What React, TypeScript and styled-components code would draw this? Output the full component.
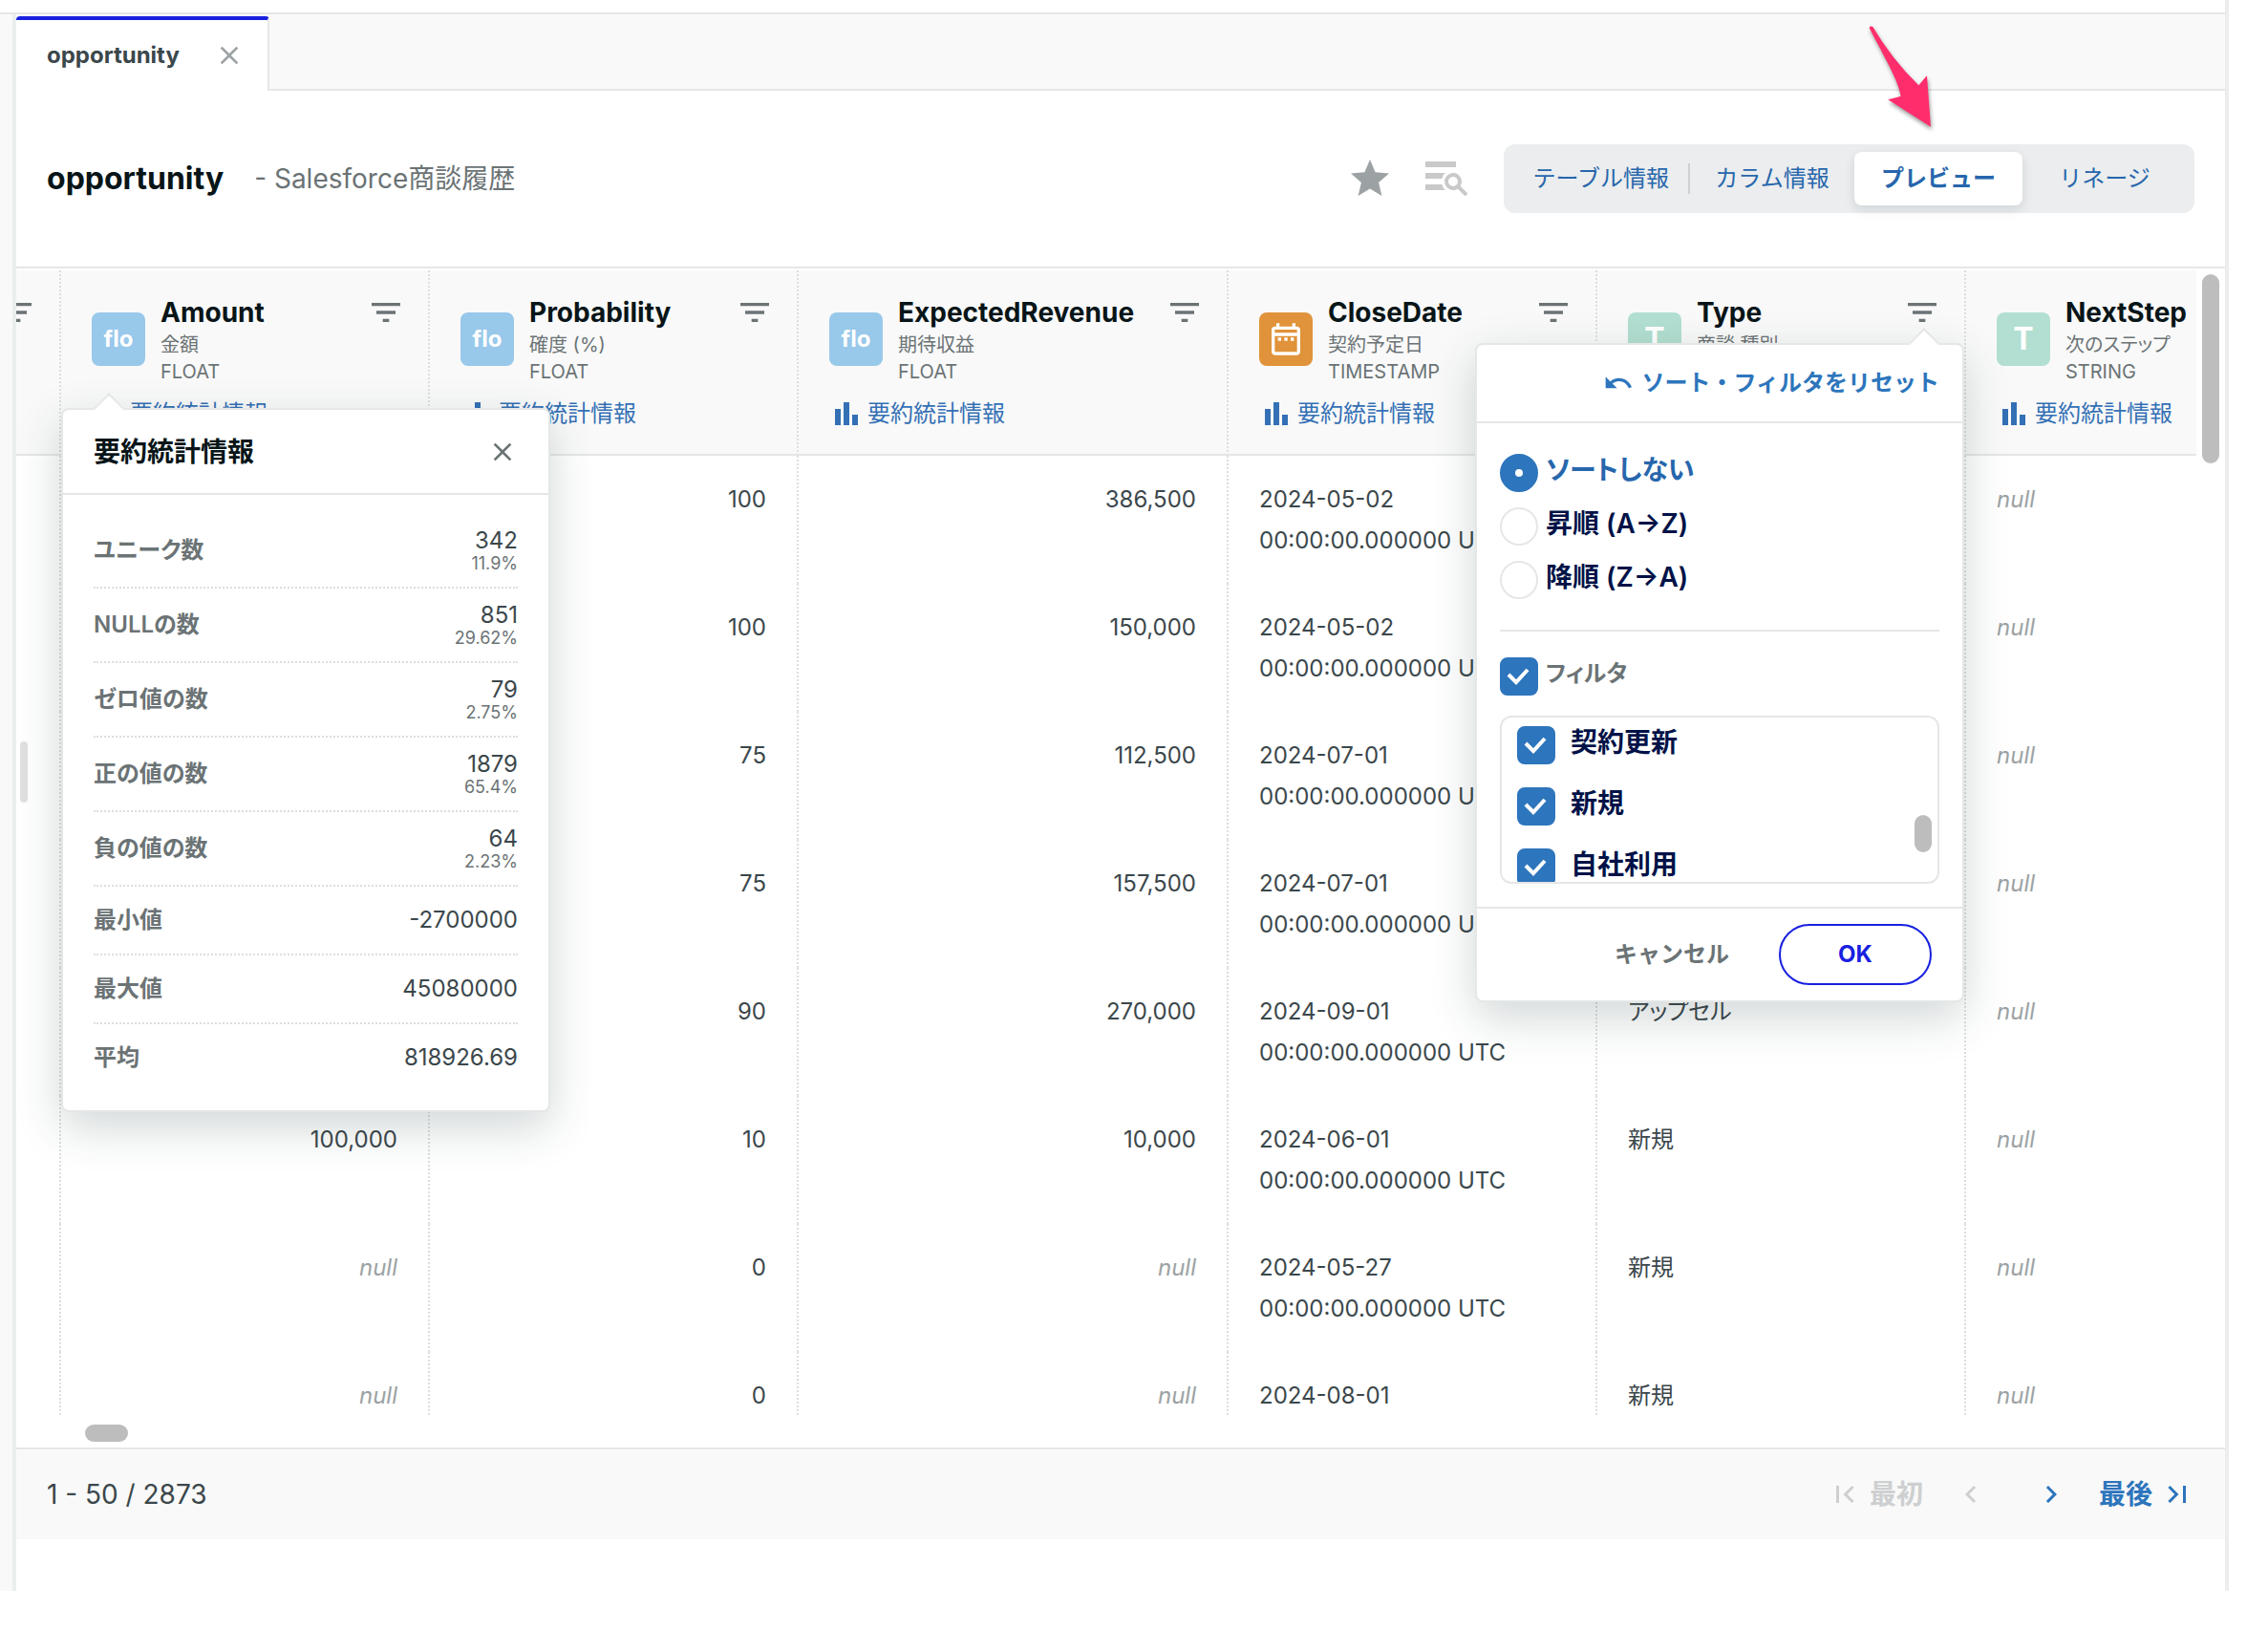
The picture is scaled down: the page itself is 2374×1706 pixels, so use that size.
import React, { useState } from "react";
import styled, { createGlobalStyle, css } from "styled-components";

const color = {
  ink: "#081518",
  text: "#3b474b",
  muted: "#6b7375",
  faint: "#9ca2a4",
  disabled: "#cdcfd0",
  line: "#e5e7e7",
  dots: "#dcdede",
  panel: "#f9f9f9",
  blue: "#2d75bc",
  blueDark: "#2766ac",
  link: "#3470b5",
  navy: "#001247",
  primary: "#1820e0",
  thumb: "#bdbdbd",
};

const GlobalStyle = createGlobalStyle`
  *, *::before, *::after { box-sizing: border-box; }
  body {
    margin: 0;
    background: #fff;
    color: ${color.text};
    font-family: Inter, "Noto Sans CJK JP", sans-serif;
    font-feature-settings: "palt";
    font-size: 24px;
  }
  button, input { font: inherit; color: inherit; }
  button {
    padding: 0;
    border: 0;
    background: none;
    cursor: pointer;
    line-height: 40px;
    font-feature-settings: normal;
  }
  h1, h2, p, dl, dd { margin: 0; }
`;

/* ---------- shell ---------- */

const Shell = styled.div`
  position: relative;
  height: 100vh;
  padding: 0 41px 41px 0;
`;

const Frame = styled.div`
  display: flex;
  flex-direction: column;
  height: 100%;
  border-right: 4px solid #eceeee;
`;

const TopEdge = styled.div`
  height: 15px;
  flex: none;
  border-bottom: 2px solid ${color.line};
`;

const Body = styled.div`
  display: flex;
  flex: 1;
  min-height: 0;
`;

const SideEdge = styled.aside`
  width: 17px;
  flex: none;
  background: ${color.panel};
  border-right: 4px solid #eaeeed;
`;

const Main = styled.main`
  position: relative;
  display: flex;
  flex-direction: column;
  flex: 1;
  min-width: 0;
  padding-bottom: 54px;
`;

const ResizeHandle = styled.div`
  position: absolute;
  left: 4px;
  top: calc(50% - 64px);
  width: 8px;
  height: 64px;
  border-radius: 4px;
  background: #e0e0e0;
`;

/* ---------- tabs ---------- */

const TabBar = styled.div`
  display: flex;
  flex: none;
  height: 80px;
  padding-top: 2px;
  background: linear-gradient(${color.line}, ${color.line}) bottom / 100% 2px no-repeat ${color.panel};
`;

const Tab = styled.div`
  display: flex;
  align-items: center;
  gap: 36px;
  padding: 0 24px 0 32px;
  background: #fff;
  border-top: 4px solid ${color.primary};
  border-right: 2px solid ${color.line};
  border-radius: 4px 4px 0 0;
  font-weight: 700;
  line-height: 40px;
  color: ${color.text};
`;

const IconButton = styled.button<{ $tone?: string }>`
  display: inline-flex;
  flex: none;
  color: ${(p) => p.$tone ?? color.muted};
`;

/* ---------- title ---------- */

const TitleBar = styled.header`
  display: flex;
  align-items: center;
  flex: none;
  height: 186px;
  padding: 0 32px;
  border-bottom: 2px solid ${color.line};
`;

const Title = styled.h1`
  font-size: 32px;
  line-height: 40px;
  font-weight: 700;
  color: ${color.ink};
`;

const Subtitle = styled.p`
  margin-left: 32px;
  font-size: 28px;
  line-height: 40px;
  color: ${color.muted};
`;

const Tools = styled.div`
  display: flex;
  align-items: center;
  gap: 34px;
  margin: 0 38px 0 auto;
`;

const Segments = styled.nav`
  display: flex;
  align-items: center;
  padding: 8px;
  border-radius: 12px;
  background: #ebedee;
`;

const Segment = styled.button<{ $active?: boolean; $divided?: boolean }>`
  position: relative;
  height: 56px;
  min-width: 172px;
  padding: 0 22px;
  border-radius: 8px;
  color: ${color.blueDark};
  ${(p) =>
    p.$active &&
    css`
      min-width: 176px;
      background: #fff;
      font-weight: 600;
      box-shadow: 0 4px 12px rgba(20, 40, 50, 0.12);
    `}
  ${(p) =>
    p.$divided &&
    css`
      &::after {
        content: "";
        position: absolute;
        right: 0;
        top: 12px;
        width: 2px;
        height: 32px;
        background: #cfd2d3;
      }
    `}
`;

/* ---------- table ---------- */

const Sheet = styled.section`
  display: flex;
  flex-direction: column;
  flex: 1;
  min-height: 0;
`;

const SheetRow = styled.div`
  display: flex;
  flex: 1;
  min-height: 0;
  padding-top: 2px;
`;

const Viewport = styled.div`
  flex: 1;
  min-width: 0;
  overflow: hidden;
`;

const VTrack = styled.div`
  width: 30px;
  flex: none;
  padding: 4px 6px;
`;

const VThumb = styled.div`
  width: 18px;
  height: 198px;
  border-radius: 9px;
  background: ${color.thumb};
`;

const HTrack = styled.div`
  height: 32px;
  flex: none;
  padding: 8px 72px;
`;

const HThumb = styled.div`
  width: 45px;
  height: 18px;
  border-radius: 9px;
  background: ${color.thumb};
`;

const Table = styled.table`
  table-layout: fixed;
  width: 2425px;
  border-spacing: 0;
  line-height: 43px;
`;

const HeadCell = styled.th`
  position: relative;
  padding: 24px 24px 24px 32px;
  vertical-align: top;
  text-align: left;
  font-weight: 400;
  background: ${color.panel};
  border-left: 2px dotted ${color.dots};
  border-bottom: 2px solid ${color.line};
  &:first-child {
    padding-left: 0;
    border-left: 0;
  }
`;

const ClippedEnd = styled.div`
  display: flex;
  justify-content: flex-end;
  overflow: hidden;
`;

const HeadGrid = styled.div`
  display: grid;
  grid-template-columns: 56px 1fr 40px;
  column-gap: 16px;
`;

const HeadGridText = styled.div`
  min-width: 0;
  white-space: nowrap;
`;

const ColName = styled.div`
  font-size: 28px;
  line-height: 40px;
  font-weight: 700;
  color: ${color.ink};
`;

const ColNote = styled.div`
  font-size: 20px;
  line-height: 28px;
  color: ${color.muted};
`;

const TypeBadge = styled.div<{ $kind: Kind }>`
  display: flex;
  align-items: center;
  justify-content: center;
  width: 56px;
  height: 56px;
  margin-top: 20px;
  border-radius: 8px;
  color: #fff;
  font-weight: 700;
  line-height: 32px;
  font-size: ${(p) => (p.$kind === "text" ? 32 : 24)}px;
  background: ${(p) => ({ float: "#98c8ea", date: "#e0933a", text: "#b2dfd1" })[p.$kind]};
`;

const StatsLink = styled.button`
  display: flex;
  align-items: center;
  gap: 10px;
  height: 36px;
  margin: 12px 0 0 6px;
  color: ${color.link};
  line-height: 36px;
`;

const Cell = styled.td<{ $align?: "right" }>`
  height: 134px;
  padding: 24px 32px;
  vertical-align: top;
  text-align: ${(p) => p.$align ?? "left"};
  border-left: 2px dotted ${color.dots};
  &:first-child {
    border-left: 0;
    padding: 0;
  }
`;

const Null = styled.em`
  color: ${color.faint};
`;

/* ---------- popovers ---------- */

const Popover = styled.div<{ $side: "left" | "right" }>`
  position: absolute;
  z-index: 10;
  width: 512px;
  background: #fff;
  border: 2px solid ${color.line};
  border-radius: 8px;
  box-shadow: 0 16px 48px rgba(30, 55, 55, 0.2);
  font-weight: 400;
  ${(p) => (p.$side === "left" ? "left: 0; top: 144px;" : "right: 0; top: 76px;")}
  &::before {
    content: "";
    position: absolute;
    top: -13px;
    ${(p) => (p.$side === "left" ? "left: 36px;" : "right: 28px;")}
    width: 24px;
    height: 24px;
    background: #fff;
    border: solid ${color.line};
    border-width: 2px 0 0 2px;
    transform: rotate(45deg);
  }
`;

const PopHead = styled.div<{ $end?: boolean }>`
  position: relative;
  display: flex;
  align-items: center;
  justify-content: ${(p) => (p.$end ? "flex-end" : "space-between")};
  height: ${(p) => (p.$end ? 82 : 89)}px;
  padding: ${(p) => (p.$end ? "0 24px" : "0 32px")};
  border-bottom: 2px solid ${color.line};
`;

const PopTitle = styled.h2`
  font-size: 28px;
  line-height: 40px;
  font-weight: 600;
  color: ${color.ink};
`;

const StatList = styled.dl`
  padding: 20px 32px;
`;

const StatRow = styled.div`
  display: flex;
  align-items: center;
  justify-content: space-between;
  padding: 14px 0;
  border-bottom: 2px dotted ${color.dots};
  &:last-child {
    border-bottom: 0;
  }
`;

const StatName = styled.dt`
  font-weight: 600;
  line-height: 42px;
  color: ${color.muted};
`;

const StatValue = styled.dd`
  text-align: right;
  line-height: 28px;
`;

const StatShare = styled.div`
  font-size: 18px;
  line-height: 20px;
  color: ${color.muted};
`;

const ResetButton = styled.button`
  display: flex;
  align-items: center;
  gap: 8px;
  font-weight: 600;
  color: ${color.blue};
`;

const SortGroup = styled.div`
  display: flex;
  flex-direction: column;
  gap: 16px;
  margin: 0 24px;
  padding: 32px 0;
  border-bottom: 2px solid ${color.line};
`;

const Choice = styled.label<{ $tone?: string; $small?: boolean; $wide?: boolean }>`
  display: flex;
  align-items: flex-start;
  gap: ${(p) => (p.$wide ? 16 : 8)}px;
  height: 40px;
  flex: none;
  font-size: ${(p) => (p.$small ? 24 : 28)}px;
  line-height: 34px;
  font-weight: 600;
  color: ${(p) => p.$tone ?? color.navy};
`;

const Radio = styled.input`
  appearance: none;
  flex: none;
  width: 40px;
  height: 40px;
  margin: 0;
  border: 2px solid ${color.line};
  border-radius: 50%;
  background: #fff;
  &:checked {
    border: 16px solid ${color.blue};
  }
`;

const BoxWrap = styled.span`
  display: grid;
  flex: none;
  width: 40px;
  height: 40px;
  & > * {
    grid-area: 1 / 1;
  }
  & > svg {
    pointer-events: none;
  }
`;

const Box = styled.input`
  appearance: none;
  width: 40px;
  height: 40px;
  margin: 0;
  border: 2px solid ${color.line};
  border-radius: 8px;
  &:checked {
    border-color: ${color.blue};
    background: ${color.blue};
  }
`;

const FilterGroup = styled.div`
  display: flex;
  flex-direction: column;
  gap: 21px;
  padding: 27px 24px 24px;
`;

const FilterBox = styled.div`
  display: flex;
  justify-content: space-between;
  height: 176px;
  overflow: hidden;
  padding: 9px 6px 0 16px;
  border: 2px solid ${color.line};
  border-radius: 12px;
`;

const FilterItems = styled.div`
  display: flex;
  flex-direction: column;
  gap: 24px;
`;

const FilterThumb = styled.div`
  width: 18px;
  height: 39px;
  margin-top: 93px;
  border-radius: 9px;
  background: ${color.thumb};
`;

const PopFoot = styled.div`
  display: flex;
  align-items: center;
  justify-content: flex-end;
  gap: 52px;
  padding: 16px 32px;
  border-top: 2px solid ${color.line};
`;

const CancelButton = styled.button`
  font-weight: 600;
  color: ${color.muted};
`;

const OkButton = styled.button`
  width: 160px;
  height: 64px;
  border: 2px solid ${color.primary};
  border-radius: 32px;
  font-weight: 700;
  color: ${color.primary};
  background: #fff;
`;

/* ---------- footer ---------- */

const Footer = styled.footer`
  display: flex;
  align-items: center;
  justify-content: space-between;
  flex: none;
  height: 96px;
  padding: 0 32px;
  font-size: 28px;
  background: ${color.panel};
  border-top: 2px solid ${color.line};
`;

const Pager = styled.div`
  display: flex;
  align-items: center;
  gap: 32px;
`;

const PagerPair = styled.div`
  display: flex;
  gap: 48px;
`;

const PagerButton = styled.button`
  display: flex;
  align-items: center;
  gap: 8px;
  font-weight: 600;
  color: ${color.blue};
  &:disabled {
    color: ${color.disabled};
  }
`;

const Pointer = styled.svg`
  position: absolute;
  z-index: 20;
  top: 10px;
  right: 334px;
  pointer-events: none;
  filter: drop-shadow(1px 3px 2px rgba(0, 0, 0, 0.4));
`;

/* ---------- icons ---------- */

const paths = {
  close: "M19 6.41L17.59 5 12 10.59 6.41 5 5 6.41 10.59 12 5 17.59 6.41 19 12 13.41 17.59 19 19 17.59 13.41 12z",
  star: "M12 17.27L18.18 21l-1.64-7.03L22 9.24l-7.19-.61L12 2 9.19 8.63 2 9.24l5.46 4.73L5.82 21z",
  filter: "M10 18h4v-2h-4v2zM3 6v2h18V6H3zm3 7h12v-2H6v2z",
  undo: "M12.5 8c-2.65 0-5.05.99-6.9 2.6L2 7v9h9l-3.62-3.62c1.39-1.16 3.16-1.88 5.12-1.88 3.54 0 6.55 2.31 7.6 5.5l2.37-.78C21.08 11.03 17.15 8 12.5 8z",
  date: "M7 11h2v2H7v-2zm14-5v14c0 1.1-.9 2-2 2H5c-1.11 0-2-.9-2-2l.01-14c0-1.1.88-2 1.99-2h1V2h2v2h8V2h2v2h1c1.1 0 2 .9 2 2zM5 8h14V6H5v2zm14 12V10H5v10h14zm-4-7h2v-2h-2v2zm-4 0h2v-2h-2v2z",
  first: "M18.41 16.59L13.82 12l4.59-4.59L17 6l-6 6 6 6zM6 6h2v12H6z",
  prev: "M15.41 7.41L14 6l-6 6 6 6 1.41-1.41L10.83 12z",
  next: "M10 6L8.59 7.41 13.17 12l-4.58 4.59L10 18l6-6z",
  last: "M5.59 7.41L10.18 12l-4.59 4.59L7 18l6-6-6-6zM16 6h2v12h-2z",
};

const Icon = ({ name, size }: { name: keyof typeof paths; size: number }) => (
  <svg width={size} height={size} viewBox="0 0 24 24" fill="currentColor" aria-hidden="true">
    <path d={paths[name]} />
  </svg>
);

const BarsIcon = () => (
  <svg width="24" height="24" viewBox="0 0 24 24" fill="currentColor" aria-hidden="true">
    <path d="M0 7h6v17H0zM9 0h6v24H9zM18 13h6v11h-6z" />
  </svg>
);

const ListSearchIcon = () => (
  <svg width="44" height="36" viewBox="0 0 44 36" fill="none" aria-hidden="true">
    <path d="M0 0h32v6H0zM0 12h32v6H0zM0 24h26v6H0z" fill="#c9c9c9" />
    <circle cx="29" cy="21" r="12" fill="#fff" />
    <circle cx="29" cy="21" r="7" stroke="#c9c9c9" strokeWidth="4" />
    <path d="M34 26l9 9" stroke="#c9c9c9" strokeWidth="4" />
  </svg>
);

/* ---------- data ---------- */

type Kind = "float" | "date" | "text";

interface Column {
  name: string;
  note: string;
  type: string;
  kind: Kind;
  width: number;
}

const columns: Column[] = [
  { name: "Amount", note: "金額", type: "FLOAT", kind: "float", width: 386 },
  { name: "Probability", note: "確度 (%)", type: "FLOAT", kind: "float", width: 386 },
  { name: "ExpectedRevenue", note: "期待収益", type: "FLOAT", kind: "float", width: 450 },
  { name: "CloseDate", note: "契約予定日", type: "TIMESTAMP", kind: "date", width: 386 },
  { name: "Type", note: "商談 種別", type: "STRING", kind: "text", width: 386 },
  { name: "NextStep", note: "次のステップ", type: "STRING", kind: "text", width: 386 },
];

const rows: (string | null)[][] = [
  ["", "100", "386,500", "2024-05-02 00:00:00.000000 UTC", "", null],
  ["", "100", "150,000", "2024-05-02 00:00:00.000000 UTC", "", null],
  ["", "75", "112,500", "2024-07-01 00:00:00.000000 UTC", "", null],
  ["", "75", "157,500", "2024-07-01 00:00:00.000000 UTC", "", null],
  ["", "90", "270,000", "2024-09-01 00:00:00.000000 UTC", "アップセル", null],
  ["100,000", "10", "10,000", "2024-06-01 00:00:00.000000 UTC", "新規", null],
  [null, "0", null, "2024-05-27 00:00:00.000000 UTC", "新規", null],
  [null, "0", null, "2024-08-01", "新規", null],
];

const stats: [string, string, string?][] = [
  ["ユニーク数", "342", "11.9%"],
  ["NULLの数", "851", "29.62%"],
  ["ゼロ値の数", "79", "2.75%"],
  ["正の値の数", "1879", "65.4%"],
  ["負の値の数", "64", "2.23%"],
  ["最小値", "-2700000"],
  ["最大値", "45080000"],
  ["平均", "818926.69"],
];

const sorts = ["ソートしない", "昇順 (A→Z)", "降順 (Z→A)"];
const filters = ["契約更新", "新規", "自社利用"];

/* ---------- parts ---------- */

const Check = ({ id }: { id: string }) => (
  <BoxWrap>
    <Box type="checkbox" id={id} defaultChecked />
    <svg width="40" height="40" viewBox="0 0 40 40" fill="none" aria-hidden="true">
      <path d="M9 18l8 8L29 13" stroke="#fff" strokeWidth="4" />
    </svg>
  </BoxWrap>
);

const StatsPopover = () => (
  <Popover $side="left">
    <PopHead>
      <PopTitle>要約統計情報</PopTitle>
      <IconButton aria-label="閉じる">
        <Icon name="close" size={32} />
      </IconButton>
    </PopHead>
    <StatList>
      {stats.map(([name, value, share]) => (
        <StatRow key={name}>
          <StatName>{name}</StatName>
          <StatValue>
            {value}
            {share && <StatShare>{share}</StatShare>}
          </StatValue>
        </StatRow>
      ))}
    </StatList>
  </Popover>
);

const FilterPopover = () => {
  const [sort, setSort] = useState(sorts[0]);
  return (
    <Popover $side="right">
      <PopHead $end>
        <ResetButton>
          <Icon name="undo" size={32} />
          ソート・フィルタをリセット
        </ResetButton>
      </PopHead>
      <SortGroup role="radiogroup">
        {sorts.map((s, i) => (
          <Choice key={s} htmlFor={`sort-${i}`} $tone={s === sort ? color.blueDark : undefined}>
            <Radio type="radio" name="sort" id={`sort-${i}`} checked={s === sort} onChange={() => setSort(s)} />
            {s}
          </Choice>
        ))}
      </SortGroup>
      <FilterGroup>
        <Choice htmlFor="filter-all" $small $tone={color.muted}>
          <Check id="filter-all" />
          フィルタ
        </Choice>
        <FilterBox>
          <FilterItems>
            {filters.map((f, i) => (
              <Choice key={f} htmlFor={`filter-${i}`} $wide>
                <Check id={`filter-${i}`} />
                {f}
              </Choice>
            ))}
          </FilterItems>
          <FilterThumb />
        </FilterBox>
      </FilterGroup>
      <PopFoot>
        <CancelButton>キャンセル</CancelButton>
        <OkButton>OK</OkButton>
      </PopFoot>
    </Popover>
  );
};

const badge = (kind: Kind) => (kind === "float" ? "flo" : kind === "text" ? "T" : <Icon name="date" size={40} />);

const FilterButton = () => (
  <IconButton aria-label="フィルタ">
    <Icon name="filter" size={40} />
  </IconButton>
);

const DataTable = () => (
  <Table>
    <colgroup>
      <col width={45} />
      {columns.map((c) => (
        <col key={c.name} width={c.width} />
      ))}
    </colgroup>
    <thead>
      <tr>
        <HeadCell>
          <ClippedEnd>
            <FilterButton />
          </ClippedEnd>
        </HeadCell>
        {columns.map((c) => (
          <HeadCell key={c.name}>
            <HeadGrid>
              <TypeBadge $kind={c.kind}>{badge(c.kind)}</TypeBadge>
              <HeadGridText>
                <ColName>{c.name}</ColName>
                <ColNote>{c.note}</ColNote>
                <ColNote>{c.type}</ColNote>
              </HeadGridText>
              <div>
                <FilterButton />
              </div>
            </HeadGrid>
            <StatsLink>
              <BarsIcon />
              要約統計情報
            </StatsLink>
            {c.name === "Amount" && <StatsPopover />}
            {c.name === "Type" && <FilterPopover />}
          </HeadCell>
        ))}
      </tr>
    </thead>
    <tbody>
      {rows.map((row, r) => (
        <tr key={r}>
          <Cell />
          {row.map((v, i) => (
            <Cell key={i} $align={columns[i].kind === "float" ? "right" : undefined}>
              {v === null ? <Null>null</Null> : v}
            </Cell>
          ))}
        </tr>
      ))}
    </tbody>
  </Table>
);

export default function App() {
  return (
    <Shell>
      <GlobalStyle />
      <Frame>
        <TopEdge />
        <Body>
          <SideEdge />
          <Main>
            <TabBar>
              <Tab>
                opportunity
                <IconButton $tone={color.faint} aria-label="タブを閉じる">
                  <Icon name="close" size={32} />
                </IconButton>
              </Tab>
            </TabBar>
            <TitleBar>
              <Title>opportunity</Title>
              <Subtitle>- Salesforce商談履歴</Subtitle>
              <Tools>
                <IconButton $tone={color.faint} aria-label="お気に入り">
                  <Icon name="star" size={48} />
                </IconButton>
                <IconButton aria-label="検索">
                  <ListSearchIcon />
                </IconButton>
              </Tools>
              <Segments>
                <Segment $divided>テーブル情報</Segment>
                <Segment>カラム情報</Segment>
                <Segment $active>プレビュー</Segment>
                <Segment>リネージ</Segment>
              </Segments>
            </TitleBar>
            <Sheet>
              <SheetRow>
                <Viewport>
                  <DataTable />
                </Viewport>
                <VTrack>
                  <VThumb />
                </VTrack>
              </SheetRow>
              <HTrack>
                <HThumb />
              </HTrack>
            </Sheet>
            <Footer>
              <p>1 - 50 / 2873</p>
              <Pager>
                <PagerButton disabled>
                  <Icon name="first" size={36} />
                  最初
                </PagerButton>
                <PagerPair>
                  <PagerButton disabled aria-label="前へ">
                    <Icon name="prev" size={36} />
                  </PagerButton>
                  <PagerButton aria-label="次へ">
                    <Icon name="next" size={36} />
                  </PagerButton>
                </PagerPair>
                <PagerButton>
                  最後
                  <Icon name="last" size={36} />
                </PagerButton>
              </Pager>
            </Footer>
            <ResizeHandle />
          </Main>
        </Body>
      </Frame>
      <Pointer width="100" height="140" viewBox="0 0 300 420" fill="#ff2d6c" aria-hidden="true">
        <path d="M50 58Q51 49 61 54Q120 155 205 238L231 207L243 368L109 283L149 272C140 220 100 155 50 58Z" />
      </Pointer>
    </Shell>
  );
}
